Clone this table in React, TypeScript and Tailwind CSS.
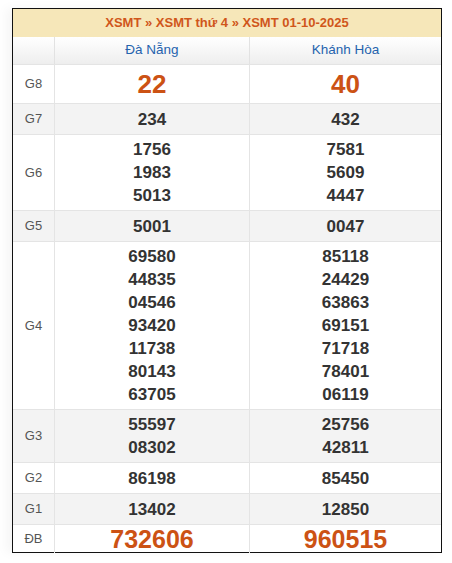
const rows: { label: string; h: string; a: string[]; b: string[]; big?: "g8" | "db"; gray?: boolean }[] = [
  { label: "G8", h: "h-[39px]", a: ["22"], b: ["40"], big: "g8" },
  { label: "G7", h: "h-[31px]", a: ["234"], b: ["432"], gray: true },
  { label: "G6", h: "h-[76px]", a: ["1756", "1983", "5013"], b: ["7581", "5609", "4447"] },
  { label: "G5", h: "h-[31px]", a: ["5001"], b: ["0047"], gray: true },
  {
    label: "G4",
    h: "h-[168px]",
    a: ["69580", "44835", "04546", "93420", "11738", "80143", "63705"],
    b: ["85118", "24429", "63863", "69151", "71718", "78401", "06119"],
  },
  { label: "G3", h: "h-[53px]", a: ["55597", "08302"], b: ["25756", "42811"], gray: true },
  { label: "G2", h: "h-[31px]", a: ["86198"], b: ["85450"] },
  { label: "G1", h: "h-[31px]", a: ["13402"], b: ["12850"], gray: true },
  { label: "ĐB", h: "h-[28px]", a: ["732606"], b: ["960515"], big: "db" },
];

const Cell = ({ nums, big }: { nums: string[]; big?: "g8" | "db" }) => {
  let cls = "text-[17px] leading-[23px] text-[#333]";
  if (big === "g8") cls = "text-[26px] leading-[30px] text-[#cc5214]";
  if (big === "db") cls = "text-[25px] leading-[28px] text-[#cc5214]";
  return (
    <div className="flex flex-col items-center justify-center font-bold">
      {nums.map((n) => (
        <span key={n} className={cls}>
          {n}
        </span>
      ))}
    </div>
  );
};

export default function App() {
  return (
    <div className="w-[452px] h-[563px] bg-white pt-[8px] pl-[12px] font-['Liberation_Sans',Arial,sans-serif]">
      <div className="w-[430px] border border-[#111] shadow-[-6px_0_10px_rgba(0,0,0,0.04)]">
        <div className="h-[28px] bg-[#f6e7b9] flex items-center justify-center text-[13px] font-bold text-[#d0561b]">
          XSMT » XSMT thứ 4 » XSMT 01-10-2025
        </div>
        <div className="h-[27px] grid grid-cols-[42px_195px_1fr] bg-gradient-to-b from-white to-[#eeeeee] text-[13.5px] text-[#2563ae]">
          <div className="border-r border-[#e2e2e2]" />
          <div className="flex items-center justify-center border-r border-[#e2e2e2]">Đà Nẵng</div>
          <div className="flex items-center justify-center">Khánh Hòa</div>
        </div>
        {rows.map((r) => (
          <div
            key={r.label}
            className={`${r.h} grid grid-cols-[42px_195px_1fr] border-t border-[#e4e4e4] ${r.gray ? "bg-[#f3f3f3]" : "bg-white"}`}
          >
            <div className="flex items-center justify-center border-r border-[#e4e4e4] text-[13px] text-[#555]">
              {r.label}
            </div>
            <div className="border-r border-[#e4e4e4] flex items-center justify-center">
              <Cell nums={r.a} big={r.big} />
            </div>
            <div className="flex items-center justify-center">
              <Cell nums={r.b} big={r.big} />
            </div>
          </div>
        ))}
      </div>
    </div>
  );
}
